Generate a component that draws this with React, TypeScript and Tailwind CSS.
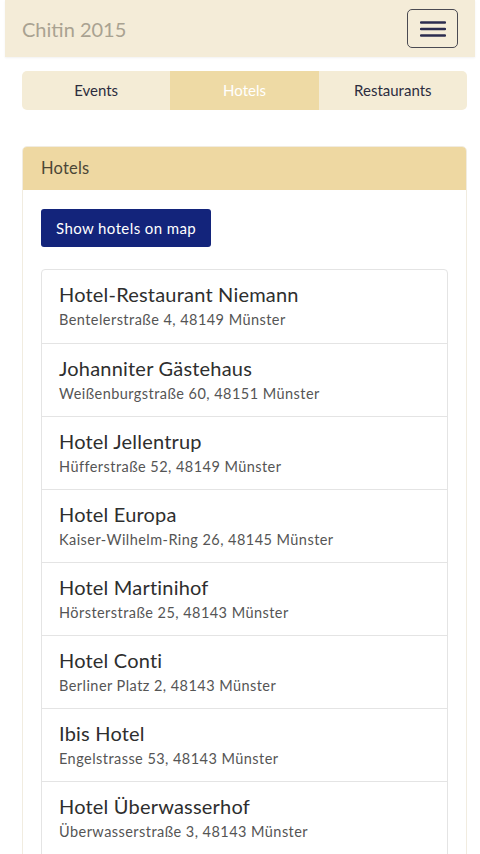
const hotels = [
  { name: "Hotel-Restaurant Niemann", address: "Bentelerstraße 4, 48149 Münster" },
  { name: "Johanniter Gästehaus", address: "Weißenburgstraße 60, 48151 Münster" },
  { name: "Hotel Jellentrup", address: "Hüfferstraße 52, 48149 Münster" },
  { name: "Hotel Europa", address: "Kaiser-Wilhelm-Ring 26, 48145 Münster" },
  { name: "Hotel Martinihof", address: "Hörsterstraße 25, 48143 Münster" },
  { name: "Hotel Conti", address: "Berliner Platz 2, 48143 Münster" },
  { name: "Ibis Hotel", address: "Engelstrasse 53, 48143 Münster" },
  { name: "Hotel Überwasserhof", address: "Überwasserstraße 3, 48143 Münster" },
];

export default function App() {
  const tabBase = "flex-1 h-full flex items-center justify-center text-[15px]";

  return (
    <div className="min-h-[854px] bg-white font-['Lato',sans-serif]">
      <nav className="mx-[5px] h-[57px] bg-[#f4ecd8] flex items-center justify-between pl-[17px] pr-[17px] shadow-[0_1px_2px_rgba(0,0,0,0.06)]">
        <span className="text-[20px] text-[#a9a291]">Chitin 2015</span>
        <button className="w-[51px] h-[39px] border-[1.5px] border-[#4a4a52] rounded-[5px] flex items-center justify-center">
          <svg width="26" height="16" viewBox="0 0 26 16">
            <path d="M1 1.5h24M1 8h24M1 14.5h24" stroke="#2b2c4f" strokeWidth="2.4" strokeLinecap="round" />
          </svg>
        </button>
      </nav>

      <div className="ml-[22px] w-[445px] mt-[14px] h-[39px] flex rounded-[5px] overflow-hidden bg-[#f4ecd6] text-[#2c2c3e]">
        <div className={tabBase}>Events</div>
        <div className={`${tabBase} bg-[#eedaa5] text-white`}>Hotels</div>
        <div className={tabBase}>Restaurants</div>
      </div>

      <div className="ml-[22px] w-[445px] mt-[36px] border border-[#f1ece0] rounded-t-[5px]">
        <div className="h-[43px] bg-[#eed8a2] flex items-center px-[18px] text-[16.5px] tracking-[0.2px] text-[#4b4636] rounded-t-[4px]">
          Hotels
        </div>
        <div className="px-[18px] pt-[19px]">
          <button className="h-[38px] px-[15px] bg-[#13247b] text-white text-[15px] tracking-[0.4px] rounded-[3px]">
            Show hotels on map
          </button>
          <ul className="mt-[22px] border border-[#e4e4e4] rounded-t-[4px]">
            {hotels.map((h, i) => (
              <li
                key={h.name}
                className={`h-[73px] pl-[17px] pt-[11px] ${i > 0 ? "border-t border-[#e4e4e4]" : ""}`}
              >
                <div className="text-[20px] leading-[26px] tracking-[0.2px] text-[#2e2e2e]">{h.name}</div>
                <div className="text-[14.5px] leading-[20px] mt-[3px] tracking-[0.45px] text-[#555]">{h.address}</div>
              </li>
            ))}
          </ul>
        </div>
      </div>
    </div>
  );
}
